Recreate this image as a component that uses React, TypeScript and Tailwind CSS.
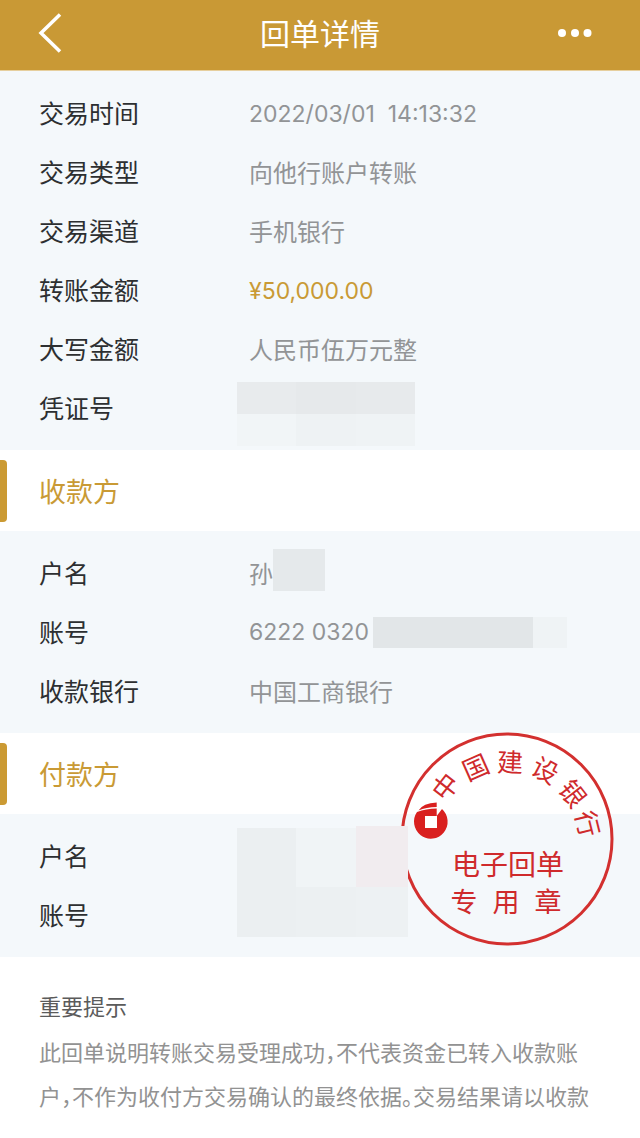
import type { ReactNode } from 'react'

const sealTitle = [
  { char: '中', x: 47, y: 56, angle: -52 },
  { char: '国', x: 77, y: 37, angle: -24 },
  { char: '建', x: 111, y: 32, angle: 2 },
  { char: '设', x: 146, y: 40, angle: 28 },
  { char: '银', x: 173, y: 63, angle: 52 },
  { char: '行', x: 188, y: 93, angle: 76 },
]

function Row({ label, children }: { label: string; children?: ReactNode }) {
  return (
    <div className="flex h-[59px] items-center">
      <dt className="w-[210px] shrink-0 text-[25px] text-[#2d2f31]">{label}</dt>
      <dd className="text-2xl whitespace-pre text-[#929496]">{children}</dd>
    </div>
  )
}

function Num({ children }: { children: ReactNode }) {
  return <span className="font-[Inter,sans-serif] text-[23px]">{children}</span>
}

function Rows({ children }: { children: ReactNode }) {
  return <dl className="bg-[#f4f8fb] pt-[13px] pr-10 pb-3 pl-[39px]">{children}</dl>
}

function SectionTitle({ children }: { children: ReactNode }) {
  return (
    <div className="flex h-[81px] items-center bg-white">
      <span className="h-[62px] w-[7px] rounded-r-sm bg-[#cb9a33]" />
      <h2 className="ml-8 pt-1 text-[27px] text-[#c99a35]">{children}</h2>
    </div>
  )
}

function Seal() {
  return (
    <svg
      viewBox="0 0 216 216"
      className="absolute -top-0.5 right-[25px] h-[216px] w-[216px]"
      fill="#cf2a2c"
      textAnchor="middle"
    >
      <circle cx="108" cy="108" r="105" fill="none" stroke="#d3302f" strokeWidth="3" />
      {sealTitle.map(({ char, x, y, angle }) => (
        <text key={char} transform={`translate(${x} ${y}) rotate(${angle})`} y="9" fontSize="26">
          {char}
        </text>
      ))}
      <g fill="#d9201f">
        <path d="M19.500 79.500Q24 72 37.700 71.500V76Q27 76 19.500 79.500z" />
        <path
          fillRule="evenodd"
          d="M18 81Q27 77.500 37.700 77.500V85L43 78A16.800 17 0 1 1 18 81zM26 85v12h12V85z"
        />
      </g>
      <path d="M26 85h12v12H26z" fill="#fff" />
      <text x="109" y="144" fontSize="28">
        电子回单
      </text>
      <text x="65" y="181" fontSize="27">
        专
      </text>
      <text x="107" y="181" fontSize="27">
        用
      </text>
      <text x="149" y="181" fontSize="27">
        章
      </text>
    </svg>
  )
}

export default function App() {
  return (
    <div className="min-h-screen bg-white font-[Lato,'Noto_Sans_CJK_SC',sans-serif]">
      <header className="flex h-[71px] items-center justify-between border-b border-[#e6cf9e] bg-[#c99935] pr-12 pb-1 pl-[38px] text-white">
        <button aria-label="返回" className="w-11">
          <svg viewBox="0 0 24 40" className="h-10 w-6" fill="none" stroke="currentColor" strokeWidth="3.500">
            <path d="M22 1.500 3 20l19 18.500" />
          </svg>
        </button>
        <h1 className="text-3xl">回单详情</h1>
        <button aria-label="更多">
          <svg viewBox="0 0 34 8" className="h-2 w-[34px]" fill="currentColor">
            <circle cx="4" cy="4" r="4" />
            <circle cx="17" cy="4" r="4" />
            <circle cx="29.500" cy="4" r="4" />
          </svg>
        </button>
      </header>

      <main>
        <section className="relative">
          <Rows>
            <Row label="交易时间">
              <Num>{'2022/03/01  14:13:32'}</Num>
            </Row>
            <Row label="交易类型">向他行账户转账</Row>
            <Row label="交易渠道">手机银行</Row>
            <Row label="转账金额">
              <span className="text-[#c99a35]">
                <Num>¥50,000.00</Num>
              </span>
            </Row>
            <Row label="大写金额">人民币伍万元整</Row>
            <Row label="凭证号" />
          </Rows>
          <div className="absolute bottom-1 left-[237px] grid h-16 w-[178px] grid-cols-3">
            <span className="bg-[#e8ebed]" />
            <span className="bg-[#e6e9eb]" />
            <span className="bg-[#e7eaec]" />
            <span className="bg-[#f1f5f7]" />
            <span className="bg-[#eef2f4]" />
            <span className="bg-[#eff3f5]" />
          </div>
        </section>

        <section>
          <SectionTitle>收款方</SectionTitle>
          <Rows>
            <Row label="户名">
              <span className="flex items-center">
                孙
                <span className="-mt-2 h-[42px] w-[52px] bg-[#e5e9eb]" />
              </span>
            </Row>
            <Row label="账号">
              <span className="flex items-center">
                <Num>6222 0320</Num>
                <span className="ml-1 h-[31px] w-40 bg-[#e2e6e8]" />
                <span className="h-[31px] w-[34px] bg-[#eff3f5]" />
              </span>
            </Row>
            <Row label="收款银行">中国工商银行</Row>
          </Rows>
        </section>

        <section className="relative">
          <SectionTitle>付款方</SectionTitle>
          <Rows>
            <Row label="户名" />
            <Row label="账号" />
          </Rows>
          <Seal />
          <div className="absolute bottom-5 left-[237px] flex h-[111px] items-end">
            <span className="h-[109px] w-[59px] bg-[#ebeff1]" />
            <span className="flex h-[109px] w-[60px] flex-col">
              <span className="h-[59px] bg-[#f0f4f6]" />
              <span className="grow bg-[#ecf0f2]" />
            </span>
            <span className="flex h-[111px] w-[52px] flex-col">
              <span className="h-[61px] bg-[#f1ecef]" />
              <span className="grow bg-[#edf1f3]" />
            </span>
          </div>
        </section>

        <section className="pt-7 pr-11 pl-[39px] text-[22px] leading-[44px] [font-feature-settings:'halt']">
          <h3 className="text-[#5b5b5b]">重要提示</h3>
          <p className="mt-0.5 text-[#929292]">
            此回单说明转账交易受理成功，不代表资金已转入收款账户，不作为收付方交易确认的最终依据。交易结果请以收款
          </p>
        </section>
      </main>
    </div>
  )
}
